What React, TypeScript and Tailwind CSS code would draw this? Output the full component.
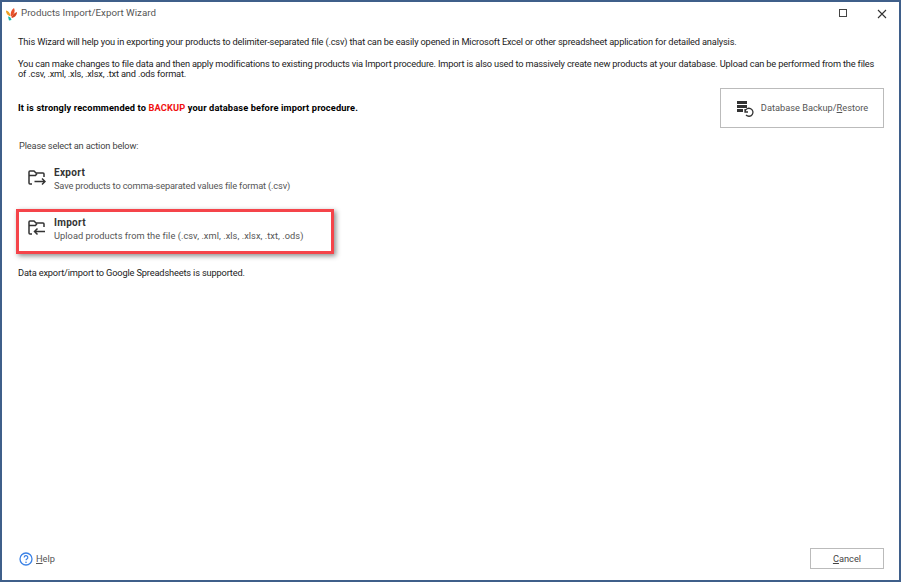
const font = { fontFamily: 'Roboto, "Liberation Sans", sans-serif' };

function FolderIcon({ dir }: { dir: "out" | "in" }) {
  return (
    <svg width="18" height="16" viewBox="0 0 18 16" fill="none" stroke="#333" strokeWidth="1.500">
      <path d="M4 14H2a1 1 0 0 1-1-1V2a1 1 0 0 1 1-1h4l2 2h7a1 1 0 0 1 1 1v3" />
      <path d="M1 5.500h6.500L9 3.500" />
      {dir === "out" ? (
        <path d="M6.500 11.500H17M14 8.500l3 3-3 3" />
      ) : (
        <path d="M17 11.500H6.500M9.500 8.500l-3 3 3 3" />
      )}
    </svg>
  );
}

function ActionRow({ dir, title, text, wide }: { dir: "out" | "in"; title: string; text: string; wide?: boolean }) {
  return (
    <div className="flex items-start">
      <div className="w-[26px] pt-[4px] shrink-0">
        <FolderIcon dir={dir} />
      </div>
      <div>
        <div className="font-bold text-[#333] text-[10px] tracking-[0.3px] leading-[13px]">{title}</div>
        <div className={wide ? "text-[#555] tracking-[0.05px] leading-[13px]" : "text-[#555] tracking-[-0.16px] leading-[13px]"}>{text}</div>
      </div>
    </div>
  );
}

export default function App() {
  return (
    <div
      className="w-[901px] h-[582px] bg-white border-2 border-[#3f5f8a] flex flex-col text-[9.25px] text-[#222] overflow-hidden"
      style={font}
    >
      <div className="h-[23px] shrink-0 flex items-center pl-[3px] pr-[12px]">
        <svg width="13" height="14" viewBox="0 0 13 14">
          <path d="M1 3.500c2 .3 4 2 4.500 5.500C3 9 1 6.500 1 3.500Z" fill="#f0a020" />
          <path d="M9 1c1.500 3 .5 6-3 9C5 6.500 6 3 9 1Z" fill="#e8502a" />
          <path d="M12 5c0 3-2 5.500-5.500 6C7 8 9 6 12 5Z" fill="#d8451f" />
          <path d="M3 9.500c1.500 0 3 1 3.500 3.500L4 13.500Z" fill="#18b8a8" />
        </svg>
        <span className="ml-[3px] text-[9.75px] text-[#555]">Products Import/Export Wizard</span>
        <div className="ml-auto flex items-center gap-[30px]">
          <div className="w-[8px] h-[8px] border border-[#444] mb-[1px]" />
          <svg width="10" height="10" viewBox="0 0 10 10" stroke="#333" strokeWidth="1.100">
            <path d="M1 1l8 8M9 1l-8 8" />
          </svg>
        </div>
      </div>

      <div className="flex-1 flex flex-col pl-[16px] pr-[15px] min-h-0">
        <p className="mt-[10px] leading-[13px] tracking-[-0.16px]">
          This Wizard will help you in exporting your products to delimiter-separated file (.csv) that can be easily opened in Microsoft Excel or other spreadsheet application for detailed analysis.
        </p>
        <p className="mt-[11px] leading-[10px] tracking-[-0.175px]">
          You can make changes to file data and then apply modifications to existing products via Import procedure. Import is also used to massively create new products at your database. Upload can be performed from the files
          <br />
          of .csv, .xml, .xls, .xlsx, .txt and .ods format.
        </p>

        <div className="flex items-center justify-between mt-[9px]">
          <p className="font-bold text-black tracking-[0.13px]">
            It is strongly recommended to <span className="text-[#f01010]">BACKUP</span> your database before import procedure.
          </p>
          <button className="w-[164px] h-[40px] border border-[#bbb] flex items-center justify-center gap-[7px] text-[#555]">
            <svg width="18" height="17" viewBox="0 0 18 17" fill="none">
              <rect x="1" y="1" width="10" height="3" fill="#333" />
              <rect x="1" y="5" width="10" height="3" fill="#333" />
              <rect x="1" y="9" width="6" height="3" fill="#333" />
              <path d="M9 11.500a4 4 0 1 1 1 3.500M9 9v3h3" stroke="#333" strokeWidth="1.300" />
            </svg>
            <span>
              Database Backup/<span className="underline">R</span>estore
            </span>
          </button>
        </div>

        <p className="mt-[11px] ml-[1px] text-[#444] tracking-[-0.16px]">Please select an action below:</p>

        <div className="mt-[13px] ml-[10px]">
          <ActionRow dir="out" title="Export" text="Save products to comma-separated values file format (.csv)" />
        </div>

        <div className="relative mt-[24px] ml-[10px]">
          <ActionRow dir="in" title="Import" text="Upload products from the file (.csv, .xml, .xls, .xlsx, .txt, .ods)" wide />
          <div className="absolute left-[-12px] top-[-7px] w-[318px] h-[45px] border-[3px] border-[#f5444a] shadow-[2px_2px_5px_rgba(0,0,0,0.45)]" />
        </div>

        <p className="mt-[24px] tracking-[-0.16px]">Data export/import to Google Spreadsheets is supported.</p>

        <div className="mt-auto mb-[11px] flex items-end justify-between">
          <div className="flex items-center gap-[3px] mb-[3px] ml-[1px]">
            <svg width="14" height="14" viewBox="0 0 14 14" fill="none">
              <circle cx="7" cy="7" r="6" stroke="#3b82e6" strokeWidth="1.300" />
              <path d="M5.200 5.500a1.800 1.800 0 1 1 2.700 1.500c-.6.4-.9.7-.9 1.300" stroke="#3b82e6" strokeWidth="1.200" />
              <circle cx="7" cy="10.200" r=".8" fill="#3b82e6" />
            </svg>
            <span className="text-[#555]">
              <span className="underline">H</span>elp
            </span>
          </div>
          <button className="w-[74px] h-[21px] border border-[#bbb] text-[#444]">
            <span className="underline">C</span>ancel
          </button>
        </div>
      </div>
    </div>
  );
}
